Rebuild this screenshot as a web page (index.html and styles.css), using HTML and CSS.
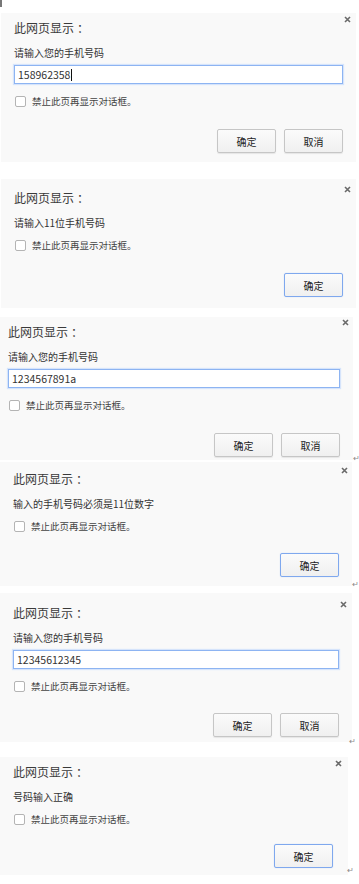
FILE: index.html
```html
<!DOCTYPE html>
<html lang="zh-CN">
<head>
    <meta charset="UTF-8">
    <meta name="viewport" content="width=device-width, initial-scale=1.0">
    <title>手机号码验证</title>
    <link rel="stylesheet" href="styles.css">
</head>
<body>

<!-- 1: prompt, wrong length -->
<div class="dialog d1">
    <span class="cursor"></span>
    <svg class="close" viewBox="0 0 7 7"><path d="M1 1L6 6M6 1L1 6"/></svg>
    <div class="title">此网页显示<span class="colon">：</span></div>
    <div class="msg">请输入您的手机号码</div>
    <div class="field">158962358<span class="caret"></span></div>
    <div class="suppress"><span class="box"></span>禁止此页再显示对话框。</div>
    <div class="actions">
        <button class="btn">确定</button>
        <button class="btn">取消</button>
    </div>
</div>

<!-- 2: alert -->
<div class="dialog d2">
    <svg class="close" viewBox="0 0 7 7"><path d="M1 1L6 6M6 1L1 6"/></svg>
    <div class="title">此网页显示<span class="colon">：</span></div>
    <div class="msg">请输入11位手机号码</div>
    <div class="suppress"><span class="box"></span>禁止此页再显示对话框。</div>
    <div class="actions">
        <button class="btn btn-default">确定</button>
    </div>
</div>

<!-- 3: prompt, not digits -->
<div class="dialog d3">
    <svg class="close" viewBox="0 0 7 7"><path d="M1 1L6 6M6 1L1 6"/></svg>
    <div class="title">此网页显示<span class="colon">：</span></div>
    <div class="msg">请输入您的手机号码</div>
    <div class="field">1234567891a</div>
    <div class="suppress"><span class="box"></span>禁止此页再显示对话框。</div>
    <div class="actions">
        <button class="btn">确定</button>
        <button class="btn">取消</button>
    </div>
    <span class="mark">↵</span>
</div>

<!-- 4: alert -->
<div class="dialog d4">
    <svg class="close" viewBox="0 0 7 7"><path d="M1 1L6 6M6 1L1 6"/></svg>
    <div class="title">此网页显示<span class="colon">：</span></div>
    <div class="msg">输入的手机号码必须是11位数字</div>
    <div class="suppress"><span class="box"></span>禁止此页再显示对话框。</div>
    <div class="actions">
        <button class="btn btn-default">确定</button>
    </div>
    <span class="mark">↵</span>
</div>

<!-- 5: prompt, correct -->
<div class="dialog d5">
    <svg class="close" viewBox="0 0 7 7"><path d="M1 1L6 6M6 1L1 6"/></svg>
    <div class="title">此网页显示<span class="colon">：</span></div>
    <div class="msg">请输入您的手机号码</div>
    <div class="field">12345612345</div>
    <div class="suppress"><span class="box"></span>禁止此页再显示对话框。</div>
    <div class="actions">
        <button class="btn">确定</button>
        <button class="btn">取消</button>
    </div>
    <span class="mark">↵</span>
</div>

<!-- 6: alert, ok -->
<div class="dialog d6">
    <svg class="close" viewBox="0 0 7 7"><path d="M1 1L6 6M6 1L1 6"/></svg>
    <div class="title">此网页显示<span class="colon">：</span></div>
    <div class="msg">号码输入正确</div>
    <div class="suppress"><span class="box"></span>禁止此页再显示对话框。</div>
    <div class="actions">
        <button class="btn btn-default">确定</button>
    </div>
    <span class="mark">↵</span>
</div>

</body>
</html>
```

FILE: styles.css
```css
body {
    margin: 0;
    background-color: #fff;
    font-family: "Noto Sans CJK SC", "Liberation Sans", sans-serif;
    color: #333;
}

.dialog {
    position: relative;
    box-sizing: border-box;
    display: flex;
    flex-direction: column;
    background-color: #f9f9f9;
    padding: 7px 13px 9px 13px;
}

.d1 { margin: 13px 0 0 1px; width: 355px; }
.d2 { margin: 17px 0 0 1px; width: 355px; padding-top: 11px; padding-bottom: 11px; }
.d3 { margin: 9px 0 0 0; width: 353px; padding-left: 8px; padding-bottom: 3px; }
.d4 { margin: 2px 0 0 0; width: 352px; padding-top: 9px; }
.d5 { margin: 7px 0 0 0; width: 352px; padding-top: 12px; padding-bottom: 5px; }
.d6 { margin: 15px 0 0 0; width: 348px; padding-right: 15px; padding-bottom: 7px; }

.close {
    position: absolute;
    top: 3px;
    right: 5px;
    width: 7px;
    height: 7px;
    stroke: #6a6a6a;
    stroke-width: 1.6;
}

.d2 .close { top: 7px; }
.d3 .close { top: 2px; right: 4px; }
.d4 .close { top: 5px; right: 4px; }
.d5 .close { top: 8px; }
.d6 .close { right: 6px; }

.title {
    font-size: 12px;
    line-height: 16px;
    color: #3a3a3a;
}

.colon {
    margin-left: 3px;
}

.msg {
    margin-top: 10px;
    font-size: 10px;
    line-height: 14px;
    color: #333;
}

.field {
    box-sizing: border-box;
    margin-top: 5px;
    height: 19px;
    padding: 0 3px;
    border: 1px solid #8db4f2;
    box-shadow: 0 0 1px 1px #d6e4fb;
    background-color: #fff;
    font-size: 10.5px;
    line-height: 17px;
    color: #333;
    display: flex;
    align-items: center;
}

.caret {
    display: inline-block;
    width: 1px;
    height: 12px;
    margin-left: 1px;
    background-color: #111;
}

.suppress {
    display: flex;
    align-items: center;
    gap: 6px;
    height: 12px;
    margin-top: 9px;
    padding-left: 1px;
    font-size: 9.5px;
    color: #444;
}

.field + .suppress {
    margin-top: 11px;
}

.box {
    box-sizing: border-box;
    width: 11px;
    height: 11px;
    border: 1px solid #b4b4b4;
    border-radius: 2px;
    background-color: #fff;
}

.actions {
    display: flex;
    justify-content: flex-end;
    gap: 8px;
    margin-top: 22px;
}

.d4 .actions { margin-top: 21px; }
.d5 .actions { margin-top: 21px; }
.d6 .actions { margin-top: 19px; }

.btn {
    box-sizing: border-box;
    width: 59px;
    height: 24px;
    padding: 0;
    border: 1px solid #c6c6c6;
    border-radius: 2px;
    background: linear-gradient(#fbfbfb, #f0f0f0);
    box-shadow: 0 1px 1px rgba(0, 0, 0, 0.08);
    font-family: "Noto Sans CJK SC", sans-serif;
    font-size: 10px;
    color: #222;
}

.btn-default {
    border-color: #7fa8ee;
    box-shadow: 0 0 1px #a9c6f5;
}

.mark {
    position: absolute;
    bottom: -3px;
    right: -7px;
    font-family: "DejaVu Sans", sans-serif;
    font-size: 8px;
    line-height: 8px;
    color: #8a8a8a;
}

.d5 .mark { right: -4px; bottom: -4px; }
.d6 .mark { right: -6px; bottom: 0; }

.cursor {
    position: absolute;
    top: -13px;
    left: -1px;
    width: 2px;
    height: 7px;
    background-color: #777;
}
```
